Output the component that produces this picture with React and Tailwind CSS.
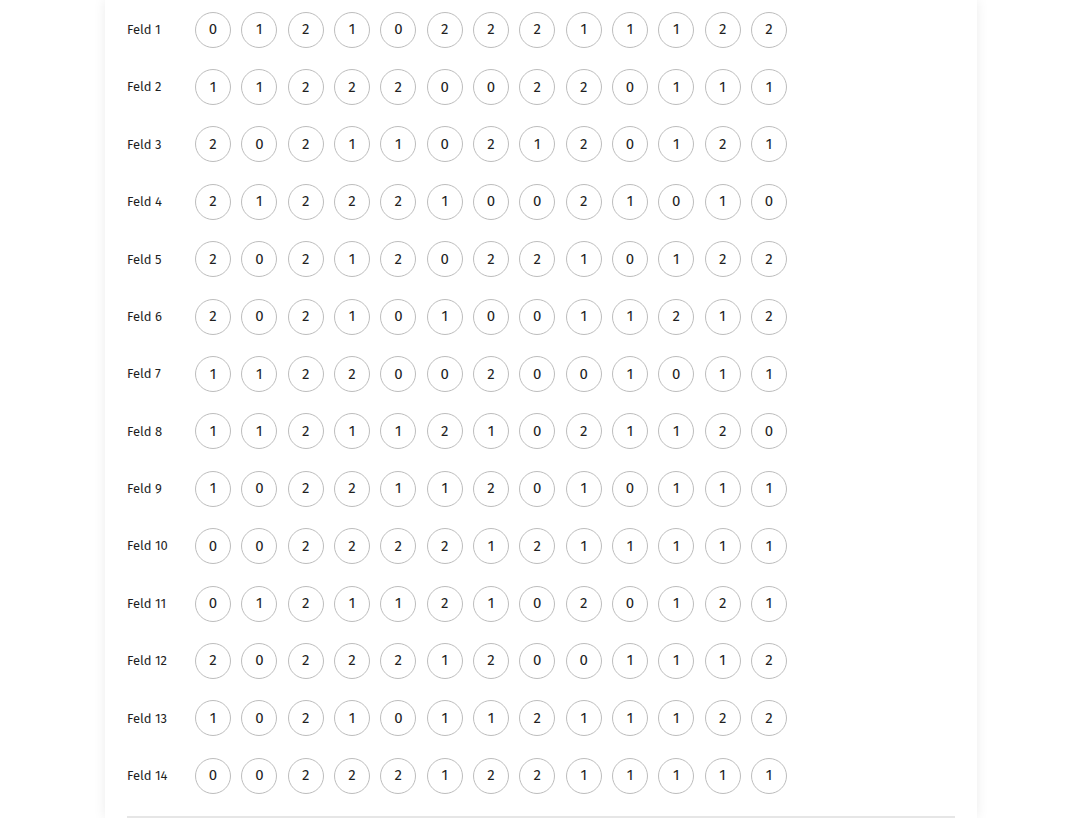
const ROWS = [
  [0, 1, 2, 1, 0, 2, 2, 2, 1, 1, 1, 2, 2],
  [1, 1, 2, 2, 2, 0, 0, 2, 2, 0, 1, 1, 1],
  [2, 0, 2, 1, 1, 0, 2, 1, 2, 0, 1, 2, 1],
  [2, 1, 2, 2, 2, 1, 0, 0, 2, 1, 0, 1, 0],
  [2, 0, 2, 1, 2, 0, 2, 2, 1, 0, 1, 2, 2],
  [2, 0, 2, 1, 0, 1, 0, 0, 1, 1, 2, 1, 2],
  [1, 1, 2, 2, 0, 0, 2, 0, 0, 1, 0, 1, 1],
  [1, 1, 2, 1, 1, 2, 1, 0, 2, 1, 1, 2, 0],
  [1, 0, 2, 2, 1, 1, 2, 0, 1, 0, 1, 1, 1],
  [0, 0, 2, 2, 2, 2, 1, 2, 1, 1, 1, 1, 1],
  [0, 1, 2, 1, 1, 2, 1, 0, 2, 0, 1, 2, 1],
  [2, 0, 2, 2, 2, 1, 2, 0, 0, 1, 1, 1, 2],
  [1, 0, 2, 1, 0, 1, 1, 2, 1, 1, 1, 2, 2],
  [0, 0, 2, 2, 2, 1, 2, 2, 1, 1, 1, 1, 1],
]

function Tip({ value }) {
  return (
    <div className="w-9 h-9 rounded-full border border-[#bdbdbd] flex items-center justify-center text-[15px] font-normal text-[#1f1f1f] leading-none">
      {value}
    </div>
  )
}

export default function App() {
  return (
    <div
      className="min-h-screen bg-white flex justify-center pl-[2px]"
      style={{ fontFamily: '"Fira Sans", "Noto Sans", sans-serif' }}
    >
      <div className="w-[872px] h-[818px] overflow-hidden bg-white shadow-[0_0_12px_rgba(0,0,0,0.08)] px-[22px] pt-[1px]">
        {ROWS.map((row, i) => (
          <div key={i} className="h-[57.4px] flex items-center">
            <div className="w-[68px] text-[13px] font-normal text-[#1f1f1f]">Feld {i + 1}</div>
            <div className="flex gap-[10.33px]">
              {row.map((v, j) => (
                <Tip key={j} value={v} />
              ))}
            </div>
          </div>
        ))}
        <div className="h-[2px] bg-[#e6e6e6] mt-[12px]" />
      </div>
    </div>
  )
}
